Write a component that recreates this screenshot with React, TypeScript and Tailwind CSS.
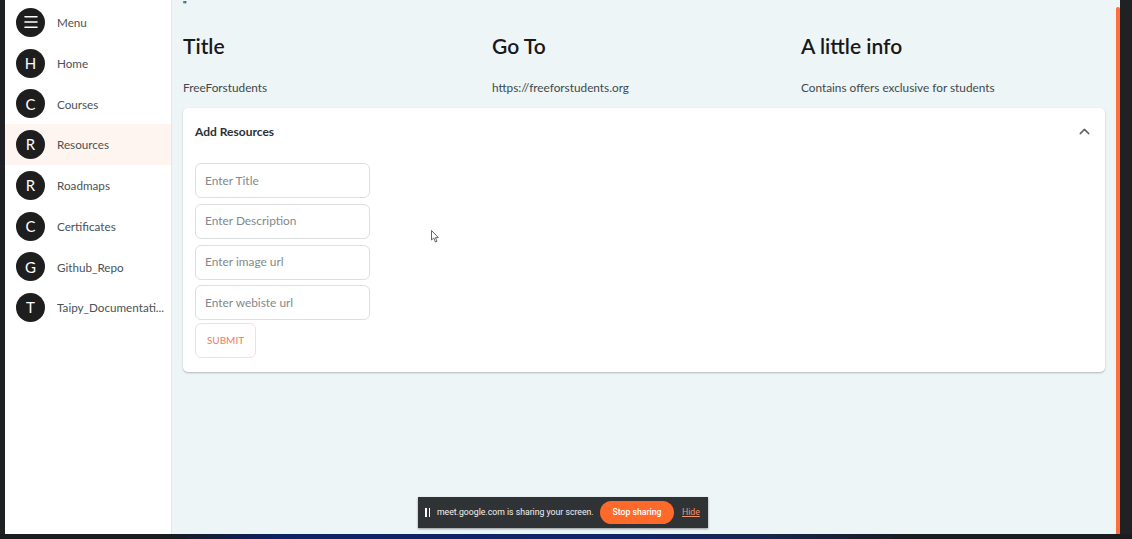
import { ChevronUp, Menu } from "lucide-react";

const navItems = [
  { letter: "H", label: "Home" },
  { letter: "C", label: "Courses" },
  { letter: "R", label: "Resources", active: true },
  { letter: "R", label: "Roadmaps" },
  { letter: "C", label: "Certificates" },
  { letter: "G", label: "Github_Repo" },
  { letter: "T", label: "Taipy_Documentati..." },
];

const placeholders = ["Enter Title", "Enter Description", "Enter image url", "Enter webiste url"];

const columns = [
  { title: "Title", value: "FreeForstudents" },
  { title: "Go To", value: "https://freeforstudents.org" },
  { title: "A little info", value: "Contains offers exclusive for students" },
];

function Avatar({ children }: { children: React.ReactNode }) {
  return (
    <div className="flex h-[29px] w-[29px] shrink-0 items-center justify-center rounded-full bg-[#1e1e1e] text-[15px] text-white">
      {children}
    </div>
  );
}

function NavRow({ icon, label, active }: { icon: React.ReactNode; label: string; active?: boolean }) {
  return (
    <div className={`flex h-[40.75px] items-center gap-[12px] pl-[11px] ${active ? "bg-[#fef5f1]" : ""}`}>
      <Avatar>{icon}</Avatar>
      <span className="mt-px text-[11.7px] whitespace-nowrap text-[#4a5256]">{label}</span>
    </div>
  );
}

export default function App() {
  return (
    <div className="relative flex h-[539px] w-[1132px] flex-col overflow-hidden bg-[#1f2125] font-['Lato','Noto_Sans',sans-serif]">
      <div className="flex h-[534px] pl-[5px] pr-[12px]">
        {/* Sidebar */}
        <aside className="w-[167px] shrink-0 border-r border-[#e2e8ea] bg-white pt-[2px]">
          <NavRow icon={<Menu size={18} strokeWidth={2.1} />} label="Menu" />
          {navItems.map((item) => (
            <NavRow key={item.label} icon={item.letter} label={item.label} active={item.active} />
          ))}
        </aside>

        {/* Main */}
        <main className="min-w-0 flex-1 bg-[#eef5f6] pl-[11px] pr-[11px]">
          <div className="h-[8px] pt-px text-[9px] leading-[8px] font-bold text-[#222]">"</div>
          <div className="grid grid-cols-[309px_309px_1fr]">
            {columns.map((col) => (
              <div key={col.title}>
                <h2 className="mt-[24px] text-[21px] leading-[28px] font-semibold text-[#17191a]">{col.title}</h2>
                <p className="mt-[20px] text-[11.8px] leading-[16px] text-[#41494d]">{col.value}</p>
              </div>
            ))}
          </div>

          {/* Accordion */}
          <section className="mt-[12px] h-[264px] rounded-[5px] bg-white px-[12px] shadow-[0_1px_2px_rgba(0,0,0,0.25)]">
            <div className="flex h-[46px] items-center justify-between">
              <span className="mt-[2px] text-[12px] font-bold text-[#2b3033]">Add Resources</span>
              <ChevronUp size={17} className="text-[#5c6266]" />
            </div>
            <div className="mt-[9px] flex w-[175px] flex-col gap-[5.75px]">
              {placeholders.map((text) => (
                <div
                  key={text}
                  className="flex h-[35px] items-center rounded-[6px] border border-[#dcdfe1] pl-[9px] text-[11.9px] text-[#83888b]"
                >
                  {text}
                </div>
              ))}
              <div className="-mt-[3px] flex h-[35px] w-[61px] items-center justify-center rounded-[6px] border border-[#fbdcd2] text-[10px] text-[#ef7b5c]">
                SUBMIT
              </div>
            </div>
          </section>
        </main>

        {/* Scrollbar */}
        <div className="flex w-[4px] shrink-0 bg-[#eef5f6] pt-[7px]">
          <div className="w-full rounded-t-[3px] bg-[#ff6f3d]" />
        </div>
      </div>

      {/* Desktop wallpaper showing under the window */}
      <div className="h-[5px] bg-[linear-gradient(90deg,#1a1c22_15%,#0c2364_25%,#0f2668_55%,#17264a_68%,#1a1c22_80%)]" />

      {/* Mouse cursor */}
      <svg className="absolute left-[431px] top-[230px]" width="8" height="13" viewBox="0 0 8 13">
        <path d="M0.5 0.5V10L2.8 8L4.4 12L6 11.3L4.4 7.6H7.4Z" fill="#fff" stroke="#555" strokeWidth="0.9" />
      </svg>

      {/* Screen share bar */}
      <div className="absolute left-[418px] top-[497px] flex h-[31px] w-[290px] items-center bg-[#303335] pl-[7px] font-['Roboto',sans-serif] text-[8.7px] whitespace-nowrap text-white shadow-[0_1px_2px_rgba(0,0,0,0.4)]">
        <span className="flex shrink-0 gap-[2px]">
          <span className="h-[9px] w-[1.5px] bg-white" />
          <span className="h-[9px] w-[1.5px] bg-white" />
        </span>
        <span className="ml-[7px] w-[163px] shrink-0 text-[#f1f1f1]">meet.google.com is sharing your screen.</span>
        <span className="flex h-[23px] w-[74px] shrink-0 items-center justify-center rounded-full bg-[#ff6a2b] font-medium">
          Stop sharing
        </span>
        <span className="ml-[8px] text-[#f0936c] underline">Hide</span>
      </div>
    </div>
  );
}
